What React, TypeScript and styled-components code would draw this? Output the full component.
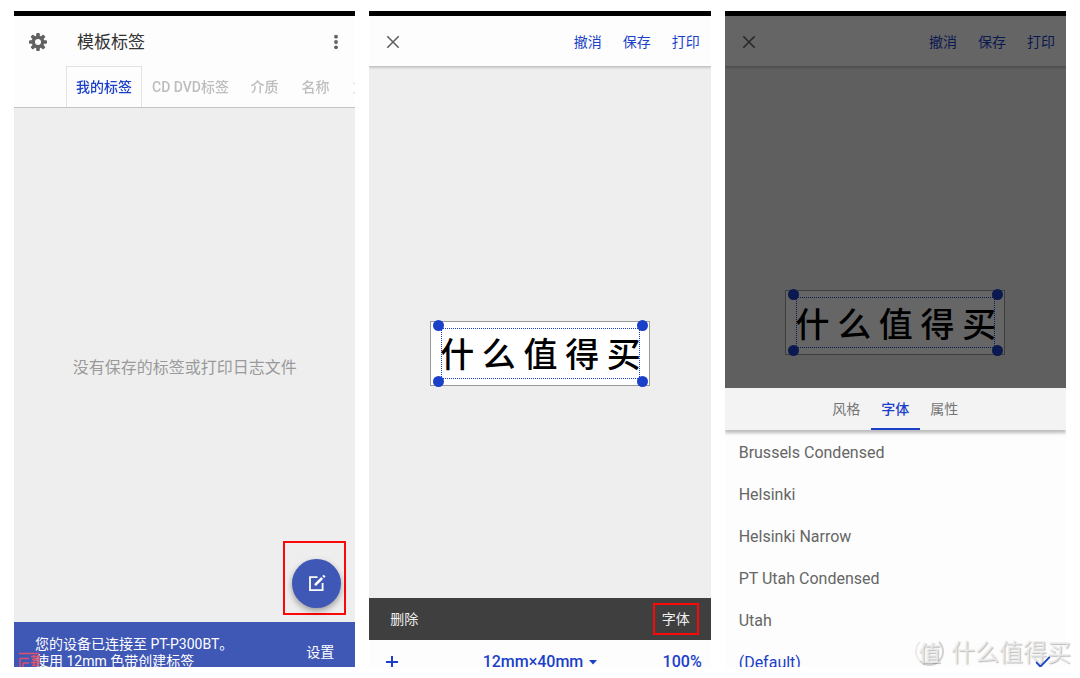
import React from 'react';
import styled, { createGlobalStyle, css } from 'styled-components';

const BLUE = '#1a3fc8';
const RED = '#fb0808';

const GlobalStyle = createGlobalStyle`
  *, *::before, *::after { box-sizing: border-box; }
  body {
    margin: 0;
    background: #fff;
    font-family: Roboto, "Noto Sans CJK SC", sans-serif;
    font-size: 14px;
    line-height: 20px;
  }
  button {
    font: inherit;
    color: inherit;
    background: none;
    border: 0;
    padding: 0;
    margin: 0;
    cursor: pointer;
    white-space: nowrap;
  }
`;

const Page = styled.main`
  position: relative;
  display: grid;
  grid-template-columns: repeat(3, minmax(0, 1fr));
  gap: 14px;
  padding: 11px 14px;
  height: 100vh;
  min-height: 520px;
`;

const Phone = styled.section`
  position: relative;
  display: flex;
  flex-direction: column;
  overflow: hidden;
  background: #fdfdfd;
  border-top: 5px solid #000;
`;

const Header = styled.header`
  flex: none;
  position: relative;
  background: #fdfdfd;
  border-bottom: 1px solid #c4c4c4;
  box-shadow: 0 1px 2px rgba(0, 0, 0, 0.16);
`;

const Toolbar = styled.div`
  display: flex;
  align-items: center;
  height: 50px;
  padding: 1px 11px 0 14px;
`;

const Title = styled.h1`
  flex: 1;
  margin: 0 0 0 29px;
  font-size: 17px;
  font-weight: 400;
  color: #333;
`;

const IconButton = styled.button<{ $accent?: boolean }>`
  display: flex;
  color: ${(p) => (p.$accent ? BLUE : '#616161')};
`;

const Actions = styled.div`
  display: flex;
  gap: 21px;
  margin-left: auto;
  color: ${BLUE};
`;

const TabStrip = styled.nav`
  display: flex;
  height: 41px;
  margin-left: 52px;
  overflow: hidden;
  mask-image: linear-gradient(to right, #000 92%, rgba(0, 0, 0, 0.4));
`;

const Tab = styled.button<{ $active?: boolean }>`
  flex: none;
  min-width: 51px;
  padding: 0 10px;
  font-weight: 500;
  color: #bdbdbd;
  ${(p) => p.$active && css`
    color: ${BLUE};
    box-shadow: inset 1px 1px #e2e2e2, inset -1px 0 #e2e2e2;
  `}
`;

const Empty = styled.div`
  flex: 1;
  position: relative;
  display: flex;
  align-items: center;
  justify-content: center;
  padding-top: 6px;
  background: #eee;
  font-size: 16px;
  color: #9a9a9a;
`;

const FabFrame = styled.div`
  position: absolute;
  right: 9px;
  bottom: 7px;
  display: flex;
  align-items: center;
  justify-content: flex-end;
  width: 63px;
  height: 74px;
  padding: 10px 3px 0 0;
  border: 2px solid ${RED};
`;

const Fab = styled.button`
  display: flex;
  align-items: center;
  justify-content: center;
  width: 49px;
  height: 49px;
  border-radius: 50%;
  background: #3f57b5;
  color: #fff;
  box-shadow: 0 3px 6px rgba(0, 0, 0, 0.35);
`;

const Clip = styled.footer<{ $height: number }>`
  flex: none;
  position: relative;
  height: ${(p) => p.$height}px;
  overflow: hidden;
`;

const Notice = styled.div`
  display: flex;
  align-items: center;
  justify-content: space-between;
  height: 60px;
  padding: 0 21px;
  background: #3f57b5;
  color: #fff;
`;

const NoticeText = styled.p`
  margin: 0;
  padding-top: 2px;
  line-height: 17px;
`;

const Stamp = styled.svg`
  position: absolute;
  left: 4px;
  bottom: 0;
`;

const Canvas = styled.div<{ $top: number }>`
  flex: 1;
  display: flex;
  align-items: center;
  justify-content: center;
  padding-top: ${(p) => p.$top}px;
  background: #eee;
`;

const LabelCard = styled.div`
  padding: 6px 9px 6px 10px;
  background: #fff;
  border: 1px solid #999;
`;

const Selection = styled.div`
  position: relative;
  display: flex;
  align-items: center;
  justify-content: center;
  width: 199px;
  height: 51px;
  border: 1px dotted ${BLUE};
  font-family: "Noto Sans CJK SC", sans-serif;
  font-size: 34px;
  line-height: 48px;
  font-weight: 500;
  color: #000;
  white-space: nowrap;
`;

const Handle = styled.i<{ $right?: boolean; $bottom?: boolean }>`
  position: absolute;
  width: 11px;
  height: 11px;
  border-radius: 50%;
  background: ${BLUE};
  ${(p) => (p.$right ? 'right: -9px;' : 'left: -9px;')}
  ${(p) => (p.$bottom ? 'bottom: -9px;' : 'top: -9px;')}
`;

const DarkBar = styled.div`
  flex: none;
  display: flex;
  align-items: center;
  justify-content: space-between;
  height: 42px;
  padding: 0 12px 0 21px;
  background: #3f3f3f;
  color: #eee;
`;

const MarkedButton = styled.button`
  height: 32px;
  padding: 0 7px;
  border: 2px solid ${RED};
`;

const SizeBar = styled.div`
  display: flex;
  align-items: center;
  justify-content: space-between;
  height: 44px;
  padding: 0 9px 0 16px;
  font-size: 16px;
  font-weight: 500;
  color: ${BLUE};
`;

const SizeButton = styled.button`
  display: flex;
  align-items: center;
  gap: 6px;
  margin-left: 18px;
`;

const Scrim = styled.div`
  position: absolute;
  inset: 0;
  background: rgba(0, 0, 0, 0.6);
`;

const Sheet = styled.div`
  flex: none;
  position: relative;
  height: 279px;
  overflow: hidden;
  background: #fdfdfd;
`;

const SheetTabs = styled.nav`
  position: relative;
  display: flex;
  justify-content: center;
  height: 42px;
  background: #f3f3f3;
  box-shadow: 0 3px 3px rgba(0, 0, 0, 0.26);
`;

const SheetTab = styled.button<{ $active?: boolean }>`
  width: 49px;
  padding-top: 2px;
  color: ${(p) => (p.$active ? BLUE : '#757575')};
  font-weight: ${(p) => (p.$active ? 500 : 400)};
  border-bottom: 2px solid ${(p) => (p.$active ? BLUE : 'transparent')};
`;

const FontList = styled.ul`
  margin: 0;
  padding: 2px 0 0;
  list-style: none;
`;

const FontButton = styled.button<{ $active?: boolean }>`
  display: flex;
  align-items: center;
  justify-content: space-between;
  width: 100%;
  height: 42px;
  padding: 0 15px 0 14px;
  font-size: 16px;
  color: ${(p) => (p.$active ? BLUE : '#666')};
`;

const CheckIcon = styled.svg`
  position: relative;
  z-index: 1;
`;

const Watermark = styled.div`
  position: absolute;
  right: 9px;
  bottom: 11px;
  display: flex;
  align-items: center;
  gap: 7px;
  font-family: "Noto Sans CJK SC", sans-serif;
  font-size: 24px;
  line-height: 32px;
  color: rgba(236, 236, 236, 0.85);
  text-shadow: 1px 1px 1px rgba(0, 0, 0, 0.26);
  pointer-events: none;
`;

const Seal = styled.span`
  display: flex;
  align-items: center;
  justify-content: center;
  width: 29px;
  height: 29px;
  border: 2px solid #d2d2d2;
  border-top-color: transparent;
  border-left-color: #ececec;
  border-radius: 50%;
  font-size: 22px;
  font-weight: 500;
`;

const Gear = () => (
  <svg width="20" height="20" viewBox="0 0 20 20">
    <g fill="currentColor">
      {[0, 45, 90, 135].map((a) => (
        <rect key={a} x="8.2" y="1" width="3.6" height="18" rx="1" transform={`rotate(${a} 10 10)`} />
      ))}
      <circle cx="10" cy="10" r="6.4" />
    </g>
    <circle cx="10" cy="10" r="3" fill="#fdfdfd" />
  </svg>
);

const Dots = () => (
  <svg width="16" height="16" viewBox="0 0 16 16" fill="currentColor">
    <circle cx="8" cy="2.7" r="1.9" />
    <circle cx="8" cy="8" r="1.9" />
    <circle cx="8" cy="13.3" r="1.9" />
  </svg>
);

const Close = () => (
  <svg width="20" height="20" viewBox="0 0 20 20" fill="none" stroke="currentColor" strokeWidth="1.6">
    <path d="M4.3 4.3 15.7 15.7M15.7 4.3 4.3 15.7" />
  </svg>
);

const Edit = () => (
  <svg width="18" height="18" viewBox="0 0 18 18" fill="none" stroke="currentColor">
    <path d="M9.5 3.2H2v13h12.6V9" strokeWidth="1.8" />
    <path d="M7 11.2 14.2 4" strokeWidth="2.6" />
    <path d="M15.2 3 16.6 1.6" strokeWidth="2.6" />
  </svg>
);

const Plus = () => (
  <svg width="14" height="14" viewBox="0 0 14 14" stroke="currentColor" strokeWidth="2">
    <path d="M7 1v12M1 7h12" />
  </svg>
);

const Caret = () => (
  <svg width="8" height="5" viewBox="0 0 8 5" fill="currentColor">
    <path d="M0 0h8L4 4.6z" />
  </svg>
);

const Check = () => (
  <CheckIcon width="16" height="14" viewBox="0 0 16 14" fill="none" stroke="currentColor" strokeWidth="1.8">
    <path d="M1.2 6.2 5.4 10.6 14.8 .8" />
  </CheckIcon>
);

const EditorHeader = () => (
  <Header>
    <Toolbar>
      <IconButton aria-label="关闭"><Close /></IconButton>
      <Actions>
        <button>撤消</button>
        <button>保存</button>
        <button>打印</button>
      </Actions>
    </Toolbar>
  </Header>
);

const LabelPreview = () => (
  <LabelCard>
    <Selection>
      什 么 值 得 买
      <Handle />
      <Handle $right />
      <Handle $bottom />
      <Handle $right $bottom />
    </Selection>
  </LabelCard>
);

const categories = ['我的标签', 'CD DVD标签', '介质', '名称', '文本'];
const fonts = ['Brussels Condensed', 'Helsinki', 'Helsinki Narrow', 'PT Utah Condensed', 'Utah', '(Default)'];

export default function App() {
  return (
    <Page lang="zh-CN">
      <GlobalStyle />
      <Phone>
        <Header>
          <Toolbar>
            <IconButton aria-label="设置"><Gear /></IconButton>
            <Title>模板标签</Title>
            <IconButton aria-label="更多"><Dots /></IconButton>
          </Toolbar>
          <TabStrip>
            {categories.map((c, i) => (
              <Tab key={c} $active={i === 0}>{c}</Tab>
            ))}
          </TabStrip>
        </Header>
        <Empty>
          没有保存的标签或打印日志文件
          <FabFrame>
            <Fab aria-label="新建标签"><Edit /></Fab>
          </FabFrame>
        </Empty>
        <Clip $height={45}>
          <Notice>
            <NoticeText>
              您的设备已连接至 PT-P300BT。<br />
              使用 12mm 色带创建标签
            </NoticeText>
            <button>设置</button>
          </Notice>
          <Stamp width="26" height="15" viewBox="0 0 26 15" fill="none" stroke="#e0526a" strokeWidth="1.4">
            <path d="M1 1.500h20M2 6.500h9M2 6.500v8.500M5 11h6M5 11v4M13 4.500h9M14 7.500h8M13 10.500h9M14 13.500h7M16 3v11M20 3v11" />
          </Stamp>
        </Clip>
      </Phone>

      <Phone>
        <EditorHeader />
        <Canvas $top={41}><LabelPreview /></Canvas>
        <DarkBar>
          <button>删除</button>
          <MarkedButton>字体</MarkedButton>
        </DarkBar>
        <Clip $height={27}>
          <SizeBar>
            <IconButton $accent aria-label="添加"><Plus /></IconButton>
            <SizeButton>12mm×40mm <Caret /></SizeButton>
            <button>100%</button>
          </SizeBar>
        </Clip>
      </Phone>

      <Phone>
        <EditorHeader />
        <Canvas $top={190}><LabelPreview /></Canvas>
        <Scrim />
        <Sheet>
          <SheetTabs>
            <SheetTab>风格</SheetTab>
            <SheetTab $active>字体</SheetTab>
            <SheetTab>属性</SheetTab>
          </SheetTabs>
          <FontList>
            {fonts.map((f, i) => (
              <li key={f}>
                <FontButton $active={i === 5}>
                  {f}
                  {i === 5 && <Check />}
                </FontButton>
              </li>
            ))}
          </FontList>
        </Sheet>
      </Phone>
      <Watermark>
        <Seal>值</Seal>
        什么值得买
      </Watermark>
    </Page>
  );
}
